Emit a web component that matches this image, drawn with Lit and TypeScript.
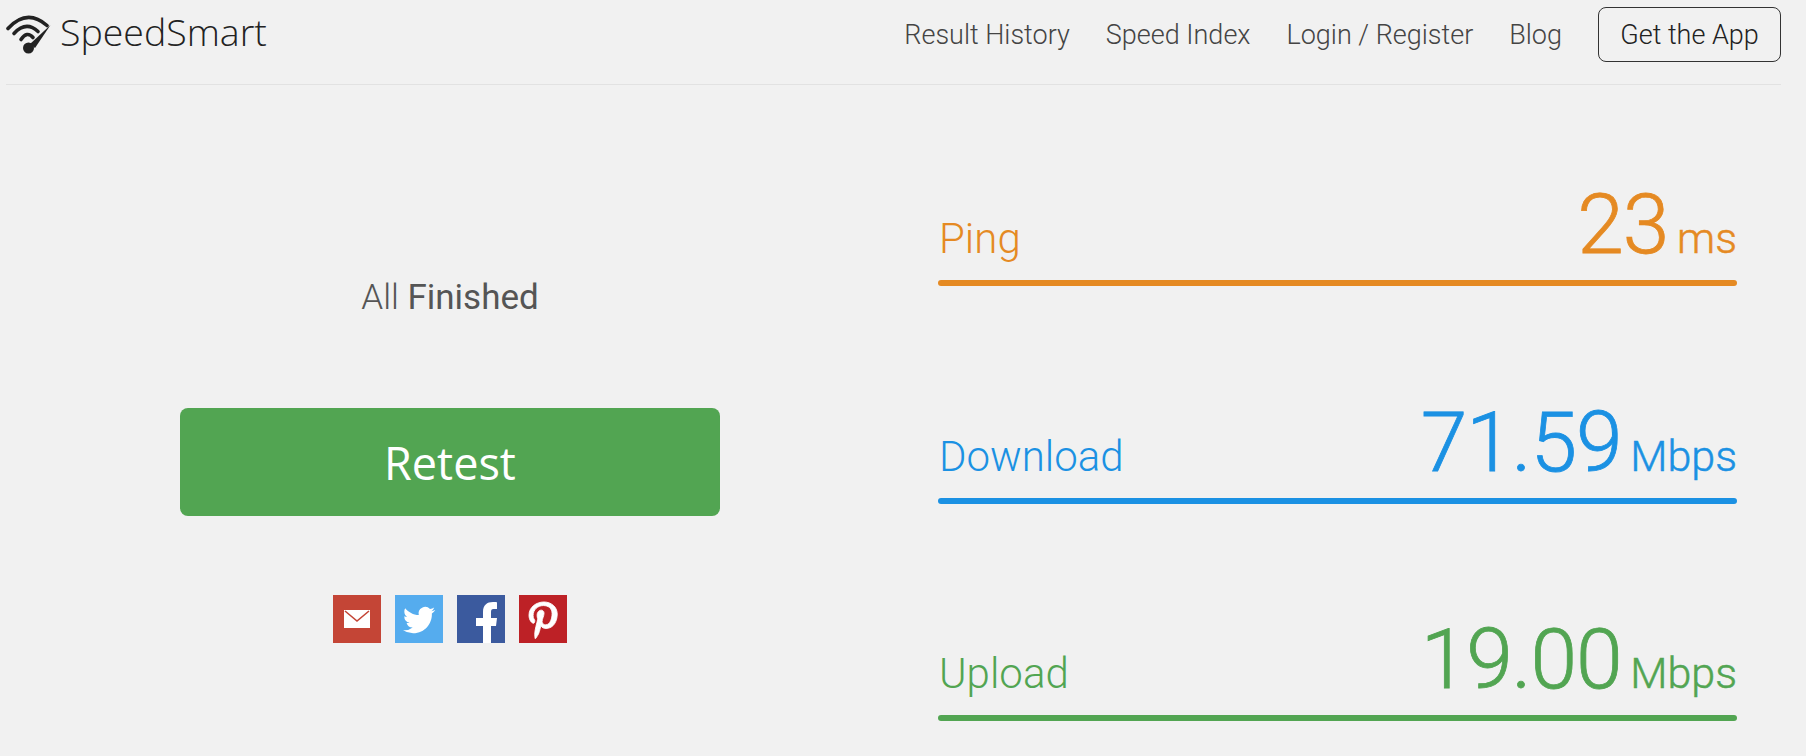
import { LitElement, html, css } from "lit";
import { customElement } from "lit/decorators.js";

const metrics = [
  { label: "Ping", value: "23", unit: "ms", cls: "ping" },
  { label: "Download", value: "71.59", unit: "Mbps", cls: "down" },
  { label: "Upload", value: "19.00", unit: "Mbps", cls: "up" },
];

@customElement("app-root")
export class AppRoot extends LitElement {
  static styles = css`
    :host { display: block; width: 1806px; height: 756px; overflow: hidden; background: #f1f1f1; font-family: Roboto, sans-serif; box-sizing: border-box; }
    header { display: flex; align-items: flex-start; justify-content: space-between; margin: 0 25px 0 6px; height: 84px; border-bottom: 1px solid #e2e2e2; box-sizing: content-box; }
    .brand { display: flex; align-items: center; gap: 8px; height: 62px; font-family: "Open Sans", sans-serif; font-weight: 300; font-size: 37.5px; color: #222; }
    .brand svg { display: block; width: 46px; height: 46px; margin-top: 7px; }
    nav { display: flex; align-items: center; gap: 36px; height: 69px; font-size: 27px; font-weight: 300; color: #444; }
    .app { display: flex; align-items: center; justify-content: center; width: 183px; height: 55px; box-sizing: border-box; border: 1px solid #333; border-radius: 8px; color: #222; }
    main { display: flex; }
    .left { width: 900px; display: flex; flex-direction: column; align-items: center; }
    .status { margin-top: 195px; height: 36px; line-height: 36px; font-size: 35px; font-weight: 300; color: #555; }
    .status b { font-weight: 400; }
    .retest { margin-top: 92px; width: 540px; height: 108px; display: flex; align-items: center; justify-content: center; background: #52a552; border-radius: 8px; color: #fff; font-family: "Open Sans", sans-serif; font-size: 45px; }
    .social { display: flex; gap: 14px; margin-top: 79px; }
    .social span { display: block; width: 48px; height: 48px; }
    .social svg { display: block; width: 48px; height: 48px; }
    .right { margin-left: 38px; width: 799px; display: flex; flex-direction: column; padding-top: 91px; }
    .metric { height: 217.5px; box-sizing: border-box; }
    .row { display: flex; align-items: baseline; justify-content: space-between; height: 104px; padding-left: 1px; }
    .label { font-size: 42px; font-weight: 300; }
    .num { font-size: 84px; font-weight: 300; line-height: 97px; letter-spacing: -1.2px; -webkit-text-stroke: 0.8px currentColor; }
    .unit { font-size: 43px; font-weight: 300; margin-left: 9px; -webkit-text-stroke: 0.5px currentColor; }
    .bar { height: 6px; border-radius: 3px; background: currentColor; }
    .ping { color: #e58a23; }
    .down { color: #1b91e3; }
    .up { color: #52a552; }
  `;

  render() {
    return html`
      <header>
        <div class="brand">
          <svg viewBox="0 0 46 46" aria-hidden="true">
            <g fill="none" stroke="#222" stroke-linecap="round" stroke-width="3.6">
              <path d="M2 16.5 Q21 -4 41 13.5"/>
              <path d="M8 21.5 Q20 8.5 32 19.5"/>
              <path d="M15 27.5 Q21 18.5 27 25.5"/>
            </g>
            <path d="M24 32 L44.5 13 L29 36 Z" fill="#222"/>
            <circle cx="22.5" cy="36" r="5.5" fill="#222"/>
          </svg>
          <span>SpeedSmart</span>
        </div>
        <nav>
          <span>Result History</span>
          <span>Speed Index</span>
          <span>Login / Register</span>
          <span>Blog</span>
          <span class="app">Get the App</span>
        </nav>
      </header>
      <main>
        <section class="left">
          <div class="status">All <b>Finished</b></div>
          <div class="retest">Retest</div>
          <div class="social">
            <span>
              <svg viewBox="0 0 48 48" aria-label="Email">
                <rect width="48" height="48" fill="#c44536"/>
                <rect x="11" y="15" width="26" height="18" fill="#fff"/>
                <path d="M12 16 L24 26 L36 16" fill="none" stroke="#c44536" stroke-width="1.6"/>
              </svg>
            </span>
            <span>
              <svg viewBox="0 0 48 48" aria-label="Twitter">
                <rect width="48" height="48" fill="#55acee"/>
                <g transform="translate(8 9) scale(1.34)">
                  <path fill="#fff" d="M23.953 4.57a10 10 0 01-2.825.775 4.958 4.958 0 002.163-2.723c-.951.555-2.005.959-3.127 1.184a4.92 4.92 0 00-8.384 4.482C7.69 8.095 4.067 6.13 1.64 3.162a4.822 4.822 0 00-.666 2.475c0 1.71.87 3.213 2.188 4.096a4.904 4.904 0 01-2.228-.616v.06a4.923 4.923 0 003.946 4.827 4.996 4.996 0 01-2.212.085 4.936 4.936 0 004.604 3.417 9.867 9.867 0 01-6.102 2.105c-.39 0-.779-.023-1.17-.067a13.995 13.995 0 007.557 2.209c9.053 0 13.998-7.496 13.998-13.985 0-.21 0-.42-.015-.63A9.935 9.935 0 0024 4.59z"/>
                </g>
              </svg>
            </span>
            <span>
              <svg viewBox="0 0 48 48" aria-label="Facebook">
                <rect width="48" height="48" fill="#3b5a9e"/>
                <path fill="#fff" d="M26 48V31H19V23H26V17C26 10 30 7 36 7C38 7 40 7.2 40 7.2V14H36.5C34.5 14 34 15 34 17V23H40L39 31H34V48Z"/>
              </svg>
            </span>
            <span>
              <svg viewBox="0 0 48 48" aria-label="Pinterest">
                <rect width="48" height="48" fill="#bd2126"/>
                <g transform="translate(10 6.5) scale(0.0735)">
                  <path fill="#fff" stroke="#fff" stroke-width="12" d="M204 6.5C101.4 6.5 0 74.9 0 185.6 0 256 39.6 296 63.6 296c9.9 0 15.6-27.6 15.6-35.4 0-9.3-23.7-29.1-23.7-67.8 0-80.4 61.2-137.4 140.4-137.4 68.1 0 118.5 38.7 118.5 109.8 0 53.1-21.3 152.7-90.3 152.7-24.9 0-46.2-18-46.2-43.8 0-37.8 26.4-74.4 26.4-113.4 0-66.2-93.9-54.2-93.9 25.8 0 16.8 2.1 35.4 9.6 50.7-13.8 59.4-42 147.9-42 209.1 0 18.9 2.7 37.5 4.5 56.4 3.4 3.8 1.7 3.4 6.9 1.5 50.4-69 48.6-82.5 71.4-172.8 12.3 23.4 44.1 36 69.3 36 106.2 0 153.9-103.5 153.9-196.8C384 71.3 298.2 6.5 204 6.5z"/>
                </g>
              </svg>
            </span>
          </div>
        </section>
        <section class="right">
          ${metrics.map(
            (m) => html`
              <div class="metric ${m.cls}">
                <div class="row">
                  <span class="label">${m.label}</span>
                  <span><span class="num">${m.value}</span><span class="unit">${m.unit}</span></span>
                </div>
                <div class="bar"></div>
              </div>
            `
          )}
        </section>
      </main>
    `;
  }
}
